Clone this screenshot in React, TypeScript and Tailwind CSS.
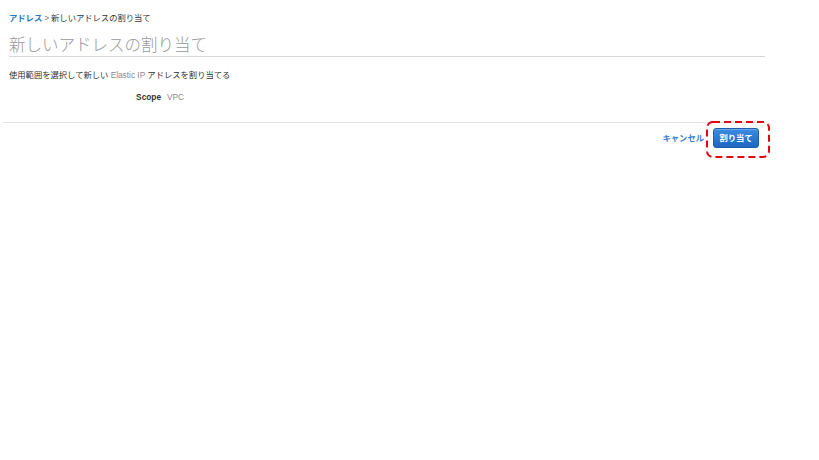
export default function App() {
  return (
    <div className='relative w-[819px] h-[460px] bg-white font-["Liberation_Sans","Noto_Sans_CJK_JP",sans-serif] text-[#333]'>
      <div className="pl-[9px] pt-[12px] w-[765px]">
        <div className="flex items-center h-[12px] leading-[12px] text-[8.3px]">
          <span className="text-[#2a77c9] font-bold">アドレス</span>
          <span className="text-[#777] mx-[2px]">&gt;</span>
          <span className="text-[#333]">新しいアドレスの割り当て</span>
        </div>
        <div className="mt-[10px] h-[23px] leading-[22px] text-[16.5px] font-light text-[#9a9a9a] border-b border-[#d6d6d6]">
          新しいアドレスの割り当て
        </div>
        <div className="mt-[12px] h-[12px] leading-[12px] text-[8.3px] text-[#333]">
          使用範囲を選択して新しい <span className="text-[#8a8a8a]">Elastic IP</span> アドレスを割り当てる
        </div>
        <div className="mt-[10px] flex items-center h-[12px] leading-[12px] text-[8.3px]">
          <span className="w-[152px] text-right font-bold text-[#333]">Scope</span>
          <span className="ml-[6px] text-[#8a8a8a]">VPC</span>
        </div>
      </div>
      <div className="mt-[19px] ml-[3px] w-[762px] border-t border-[#e3e3e3]">
        <div className="flex justify-end items-center pt-[5px] pr-[6px] gap-[9px]">
          <span className="text-[#3a7fcf] font-bold text-[8.3px] leading-[12px]">キャンセル</span>
          <button className="h-[20px] w-[46px] rounded-[3px] border border-[#1b5eae] bg-gradient-to-b from-[#3b8ce2] to-[#1f66bf] text-white font-bold text-[8.3px] leading-[18px] shadow-[inset_0_1px_0_rgba(255,255,255,0.25)]">
            割り当て
          </button>
        </div>
      </div>
      <svg className="absolute left-[706px] top-[121px]" width="64" height="37" viewBox="0 0 64 37">
        <rect x="1" y="1" width="62" height="35" rx="6" ry="6" fill="none" stroke="#e30613" strokeWidth="2" strokeDasharray="7 4" />
      </svg>
    </div>
  );
}
